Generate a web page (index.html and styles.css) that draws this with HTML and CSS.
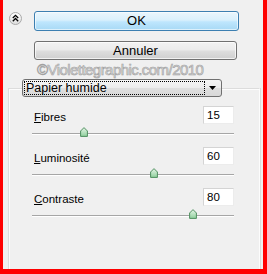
FILE: index.html
```html
<!DOCTYPE html>
<html>
<head>
<meta charset="utf-8">
<link rel="stylesheet" href="styles.css">
</head>
<body>
<div class="window">
  <div class="top">
    <div class="chev">
      <svg width="13" height="13" viewBox="0 0 13 13">
        <defs>
          <linearGradient id="cg" x1="0" y1="0" x2="0" y2="1">
            <stop offset="0" stop-color="#ffffff"/>
            <stop offset="1" stop-color="#dcdcdc"/>
          </linearGradient>
        </defs>
        <circle cx="6.5" cy="6.5" r="6" fill="url(#cg)" stroke="#a9a9a9"/>
        <polyline points="3.8,6 6.5,3.3 9.2,6" fill="none" stroke="#000" stroke-width="1.3"/>
        <polyline points="3.8,9.2 6.5,6.5 9.2,9.2" fill="none" stroke="#000" stroke-width="1.3"/>
      </svg>
    </div>
    <div class="buttons">
      <div class="btn btn-ok">OK</div>
      <div class="btn btn-cancel">Annuler</div>
      <div class="watermark">©Violettegraphic.com/2010</div>
    </div>
  </div>
  <div class="select">
    <div class="select-focus">Papier humide</div>
    <div class="select-arrow">
      <svg width="7" height="4" viewBox="0 0 7 4"><polygon points="0,0 7,0 3.5,4" fill="#000"/></svg>
    </div>
  </div>
  <div class="panel">
    <div class="group">
      <div class="row">
        <span class="label"><u>F</u>ibres</span>
        <div class="input">15</div>
      </div>
      <div class="slider">
        <div class="track"></div>
        <svg class="thumb" style="left:48px" width="8" height="10" viewBox="0 0 8 10">
          <defs>
            <linearGradient id="tg1" x1="0" y1="0" x2="0" y2="1">
              <stop offset="0" stop-color="#e6f6e8"/>
              <stop offset="1" stop-color="#8fcf9c"/>
            </linearGradient>
          </defs>
          <path d="M4 0.6 L7.4 4 V9.4 H0.6 V4 Z" fill="url(#tg1)" stroke="#4f8f5f" stroke-width="1"/>
        </svg>
      </div>
    </div>
    <div class="group">
      <div class="row">
        <span class="label"><u>L</u>uminosité</span>
        <div class="input">60</div>
      </div>
      <div class="slider">
        <div class="track"></div>
        <svg class="thumb" style="left:118px" width="8" height="10" viewBox="0 0 8 10">
          <defs>
            <linearGradient id="tg2" x1="0" y1="0" x2="0" y2="1">
              <stop offset="0" stop-color="#e6f6e8"/>
              <stop offset="1" stop-color="#8fcf9c"/>
            </linearGradient>
          </defs>
          <path d="M4 0.6 L7.4 4 V9.4 H0.6 V4 Z" fill="url(#tg2)" stroke="#4f8f5f" stroke-width="1"/>
        </svg>
      </div>
    </div>
    <div class="group">
      <div class="row">
        <span class="label"><u>C</u>ontraste</span>
        <div class="input">80</div>
      </div>
      <div class="slider">
        <div class="track"></div>
        <svg class="thumb" style="left:157px" width="8" height="10" viewBox="0 0 8 10">
          <defs>
            <linearGradient id="tg3" x1="0" y1="0" x2="0" y2="1">
              <stop offset="0" stop-color="#e6f6e8"/>
              <stop offset="1" stop-color="#8fcf9c"/>
            </linearGradient>
          </defs>
          <path d="M4 0.6 L7.4 4 V9.4 H0.6 V4 Z" fill="url(#tg3)" stroke="#4f8f5f" stroke-width="1"/>
        </svg>
      </div>
    </div>
  </div>
</div>
</body>
</html>
```
FILE: styles.css
```css
* { box-sizing: border-box; }
html, body { margin: 0; padding: 0; }
body { font-family: "Liberation Sans", Arial, sans-serif; }

.window {
  width: 267px;
  height: 274px;
  background: #f0f0f0;
  border-left: 3px solid #ff0000;
  border-right: 4px solid #ff0000;
  border-bottom: 5px solid #ff0000;
  padding-top: 11px;
  display: flex;
  flex-direction: column;
  overflow: hidden;
}

.top {
  display: flex;
  padding-left: 6px;
}

.chev {
  width: 13px;
  height: 13px;
  margin-top: 1px;
  line-height: 0;
}

.buttons {
  margin-left: 12px;
  display: flex;
  flex-direction: column;
  width: 205px;
}

.btn {
  font-size: 13px;
  color: #000;
  text-align: center;
  border-radius: 3px;
}

.btn-ok {
  height: 20px;
  line-height: 18px;
  border: 1px solid #3c7fb1;
  background: linear-gradient(to bottom, #eaf6fd 0%, #d9f0fc 45%, #bee6fd 55%, #a7d9f5 100%);
  box-shadow: inset 0 0 0 1px rgba(255,255,255,0.6);
}

.btn-cancel {
  margin-top: 10px;
  width: 203px;
  height: 19px;
  line-height: 17px;
  border: 1px solid #707070;
  background: linear-gradient(to bottom, #f2f2f2 0%, #ebebeb 45%, #dddddd 55%, #cfcfcf 100%);
  box-shadow: inset 0 0 0 1px rgba(255,255,255,0.7);
}

.watermark {
  margin-top: 1px;
  padding-left: 3px;
  height: 17px;
  line-height: 17px;
  font-size: 15px;
  letter-spacing: -0.55px;
  color: #dcdcdc;
  -webkit-text-stroke: 0.6px #a0a0a0;
  white-space: nowrap;
}

.select {
  margin-top: 1px;
  margin-left: 19px;
  width: 200px;
  height: 18px;
  border: 1px solid #707070;
  border-radius: 3px;
  background: linear-gradient(to bottom, #f4f4f4 0%, #ececec 50%, #dfdfdf 51%, #d8d8d8 100%);
  display: flex;
  align-items: center;
  padding: 0 2px 0 1px;
  position: relative;
  z-index: 1;
}

.select-focus {
  flex: 1;
  height: 14px;
  border: 1px dotted #000;
  font-size: 12.5px;
  line-height: 12px;
  padding-left: 1px;
  color: #000;
  white-space: nowrap;
}

.select-arrow {
  width: 14px;
  display: flex;
  justify-content: center;
  align-items: center;
  line-height: 0;
}

.panel {
  margin-top: -9px;
  margin-left: 5px;
  width: 252px;
  flex: 1;
  border-left: 1px solid #dcdcdc;
  border-top: 1px solid #dcdcdc;
  border-right: 1px solid #fcfcfc;
  box-shadow: inset 1px 1px 0 #fcfcfc, 1px 0 0 #dcdcdc;
  padding: 17px 25px 0 23px;
}

.group {
  margin-bottom: 8px;
}

.row {
  display: flex;
  justify-content: space-between;
  align-items: flex-end;
  height: 18px;
}

.label {
  font-size: 11.5px;
  line-height: 13px;
  margin-left: 2px;
  color: #000;
}

.input {
  width: 31px;
  height: 18px;
  background: #fff;
  border: 1px solid #d4d4d4;
  border-right-color: #ececec;
  border-bottom-color: #ececec;
  font-size: 11.5px;
  line-height: 16px;
  padding-left: 3px;
  color: #000;
}

.slider {
  margin-top: 3px;
  height: 12px;
  position: relative;
}

.track {
  position: absolute;
  left: 0;
  right: 0;
  top: 6px;
  height: 2px;
  border-top: 1px solid #a6a6a6;
  border-bottom: 1px solid #ffffff;
}

.thumb {
  position: absolute;
  top: 0;
}
```
